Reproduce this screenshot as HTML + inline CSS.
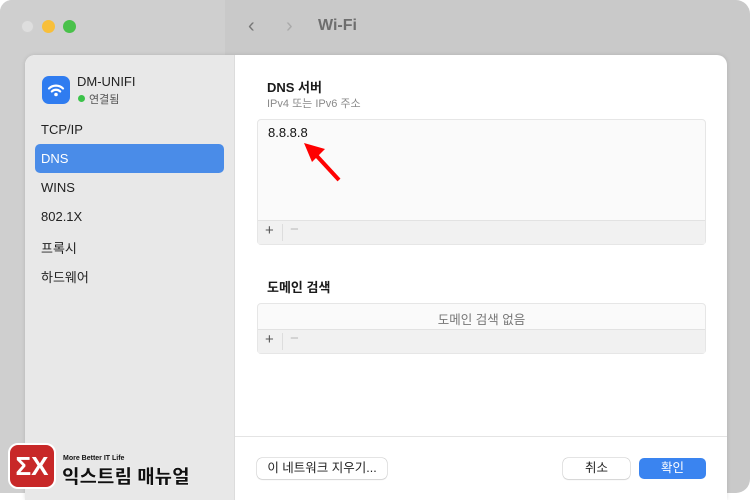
<!DOCTYPE html>
<html><head><meta charset="utf-8"><style>
*{margin:0;padding:0;box-sizing:border-box}
body{width:750px;height:500px;overflow:hidden;background:#fff;font-family:"Liberation Sans","Noto Sans CJK KR",sans-serif;position:relative}
.win{position:absolute;left:0;top:0;width:750px;height:493px;background:#c9c9c9;border-radius:12px 14px 14px 0}
.winside{position:absolute;left:0;top:0;width:225px;height:493px;background:#cfcfcf;border-radius:12px 0 0 0}
.dot{position:absolute;top:20px;width:13px;height:13px;border-radius:50%}
.sheet{position:absolute;left:25px;top:55px;width:702px;height:445px;background:#fff;border-radius:10px 10px 0 0;overflow:hidden;box-shadow:0 0 4px rgba(0,0,0,.12)}
.side{position:absolute;left:0;top:0;width:210px;height:445px;background:#e8e8e8;border-right:1px solid #dcdcdc}
.item{position:absolute;left:16px;font-size:13px;color:#222}
.sel{position:absolute;left:10px;top:89px;width:189px;height:29px;background:#4a8ce8;border-radius:5px}
.main{position:absolute;left:210px;top:0;right:0;bottom:0}
.h{position:absolute;font-size:13px;font-weight:bold;color:#1a1a1a}
.box{position:absolute;left:22px;width:449px;border:1px solid #e6e6e6;border-radius:4px;background:#fafafa}
.bar{position:absolute;left:0;right:0;bottom:0;height:24px;background:#f1f1f1;border-top:1px solid #e2e2e2;font-size:15px;color:#555}
.btn{position:absolute;top:403px;height:21px;border-radius:5px;background:#fff;box-shadow:0 0 0 .5px #c8c8c8,0 1px 1px rgba(0,0,0,.12);font-size:12.5px;text-align:center;line-height:21px;color:#222}
</style></head><body>
<div class="win"><div class="winside"></div>
<div class="dot" style="left:21px;background:#dedede;border:1px solid #d0d0d0"></div>
<div class="dot" style="left:42px;background:#f8bf3a"></div>
<div class="dot" style="left:63px;background:#49c14a"></div>
<div style="position:absolute;left:248px;top:15px;font-size:20px;color:#777">&#8249;</div>
<div style="position:absolute;left:286px;top:15px;font-size:20px;color:#aaa">&#8250;</div>
<div style="position:absolute;left:318px;top:17px;font-size:16px;font-weight:bold;color:#6e6e6e">Wi-Fi</div>
</div>
<div class="sheet">
<div class="side">
<div style="position:absolute;left:17px;top:21px;width:28px;height:28px;border-radius:7px;background:#2f7cf0">
<svg width="28" height="28" viewBox="0 0 28 28"><g fill="none" stroke="#fff" stroke-width="2.2" stroke-linecap="round"><path d="M7 12.5a10 10 0 0 1 14 0"/><path d="M9.8 15.5a6 6 0 0 1 8.4 0"/></g><circle cx="14" cy="18.5" r="1.8" fill="#fff"/></svg></div>
<div style="position:absolute;left:52px;top:19px;font-size:13px;color:#222">DM-UNIFI</div>
<div style="position:absolute;left:53px;top:40px;width:7px;height:7px;border-radius:50%;background:#3cc34a"></div>
<div style="position:absolute;left:64px;top:36px;font-size:11px;color:#555">연결됨</div>
<div class="item" style="top:67px">TCP/IP</div>
<div class="sel"></div>
<div class="item" style="top:96px;color:#fff">DNS</div>
<div class="item" style="top:125px">WINS</div>
<div class="item" style="top:154px">802.1X</div>
<div class="item" style="top:183px">프록시</div>
<div class="item" style="top:212px">하드웨어</div>
</div>
<div class="main">
<div class="h" style="left:32px;top:22px">DNS 서버</div>
<div style="position:absolute;left:32px;top:40px;font-size:11px;color:#8a8a8a">IPv4 또는 IPv6 주소</div>
<div class="box" style="top:64px;height:126px">
<div style="position:absolute;left:10px;top:5px;font-size:13px;color:#111">8.8.8.8</div>
<svg style="position:absolute;left:43px;top:18px" width="50" height="48" viewBox="0 0 50 48"><path d="M38 42L14 16" stroke="#f00" stroke-width="4"/><path d="M3 5L24 11L11 24Z" fill="#f00"/></svg>
<div class="bar"><span style="position:absolute;left:7px;top:1px">+</span><span style="position:absolute;left:24px;top:3px;width:1px;height:17px;background:#ddd"></span><span style="position:absolute;left:32px;top:0;color:#bbb">−</span></div>
</div>
<div class="h" style="left:32px;top:222px">도메인 검색</div>
<div class="box" style="top:248px;height:51px">
<div style="position:absolute;left:0;right:0;top:5px;text-align:center;font-size:12.5px;color:#777">도메인 검색 없음</div>
<div class="bar"><span style="position:absolute;left:7px;top:1px">+</span><span style="position:absolute;left:24px;top:3px;width:1px;height:17px;background:#ddd"></span><span style="position:absolute;left:32px;top:0;color:#bbb">−</span></div>
</div>
<div style="position:absolute;left:0;right:0;top:381px;height:1px;background:#e4e4e4"></div>
<div class="btn" style="left:22px;width:130px">이 네트워크 지우기...</div>
<div class="btn" style="left:328px;width:67px">취소</div>
<div class="btn" style="left:404px;width:67px;background:#3a84f0;color:#fff;box-shadow:none">확인</div>
</div>
</div>
<div style="position:absolute;left:8px;top:443px;width:48px;height:46px;border-radius:10px;background:#c82828;border:2px solid #fff;color:#fff;font-weight:bold;font-size:26px;text-align:center;line-height:42px">ΣX</div>
<div style="position:absolute;left:63px;top:455px;font-size:7px;font-weight:bold;color:#111">More Better IT Life</div>
<div style="position:absolute;left:62px;top:462px;font-size:19px;font-weight:900;color:#111;-webkit-text-stroke:.4px #fff">익스트림 매뉴얼</div>
</body></html>
